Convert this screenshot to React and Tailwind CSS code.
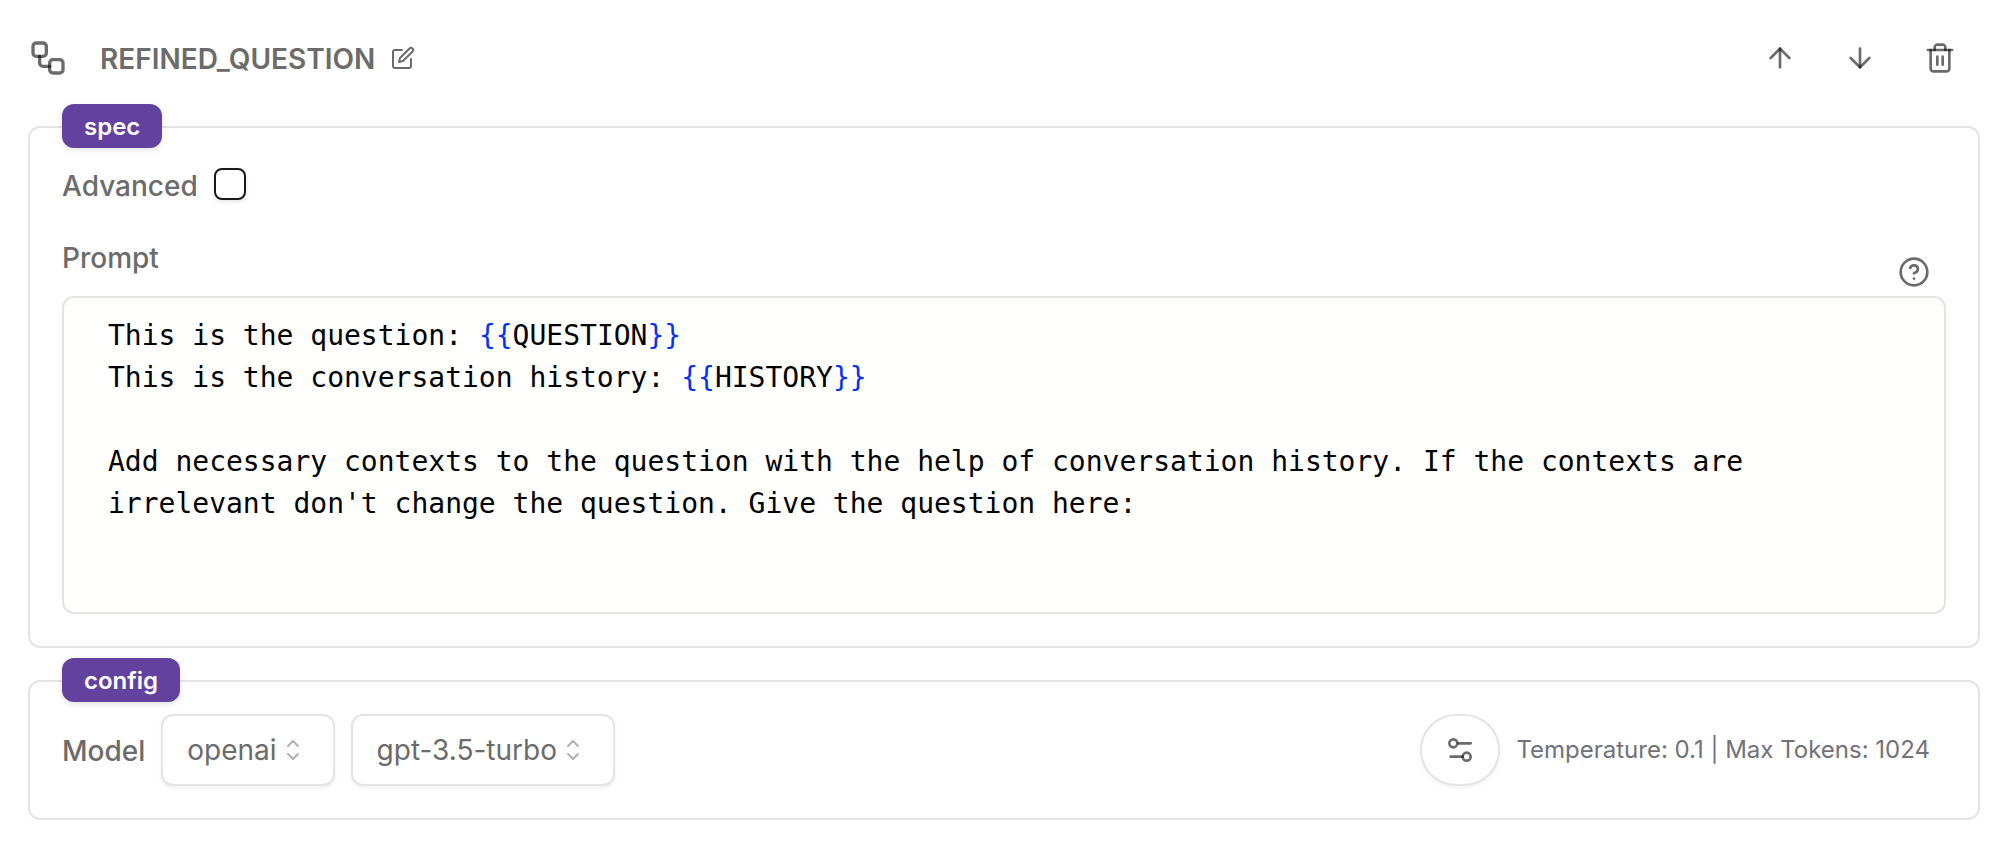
import { useState } from "react";

function Icon({ children, className }) {
  return (
    <svg viewBox="0 0 24 24" className={className} fill="none" stroke="rgba(0,0,0,0.58)" strokeWidth="2" strokeLinecap="round" strokeLinejoin="round" aria-hidden="true">
      {children}
    </svg>
  );
}

function Panel({ title, children, className }) {
  return (
    <section className={`relative rounded-xl border-2 border-[#e4e4e4] px-8 ${className}`}>
      <h2 className="absolute -top-6 left-8 rounded-xl bg-[#63419f] px-[22px] pt-[7px] pb-[5px] text-2xl leading-8 font-semibold text-white shadow-[0_2px_6px_rgba(0,0,0,0.12)]">
        {title}
      </h2>
      {children}
    </section>
  );
}

function Picker({ label, value, options }) {
  const [current, setCurrent] = useState(value);
  return (
    <div className="relative">
      <select
        aria-label={label}
        value={current}
        onChange={(e) => setCurrent(e.target.value)}
        className="field-sizing-content h-[72px] appearance-none rounded-xl border-2 border-[#e4e4e4] bg-white pr-14 pl-6 text-[28px] leading-10 text-[#6b6b6b] shadow-[0_2px_4px_rgba(0,0,0,0.06)]"
      >
        {options.map((o) => (
          <option key={o}>{o}</option>
        ))}
      </select>
      <svg viewBox="0 0 12 20" className="pointer-events-none absolute top-[26px] right-9 h-5 w-3" fill="none" stroke="#b0b0b0" strokeWidth="2" strokeLinecap="round" strokeLinejoin="round" aria-hidden="true">
        <path d="M1 6 6 1l5 5" />
        <path d="M1 14l5 5 5-5" />
      </svg>
    </div>
  );
}

function Variable({ name }) {
  return (
    <>
      <span className="text-[#0431fa]">{"{{"}</span>
      {name}
      <span className="text-[#0431fa]">{"}}"}</span>
    </>
  );
}

export default function App() {
  return (
    <main className="bg-white pt-7 pr-[26px] pl-7 font-[Inter,sans-serif] text-[28px] leading-10 text-[#6b6b6b]">
      <header className="mb-[38px] flex h-[60px] items-center justify-between pr-6">
        <div className="flex items-center">
          <Icon className="h-10 w-10">
            <rect x="3" y="3" width="8" height="8" rx="2" />
            <path d="M7 11v4a2 2 0 0 0 2 2h4" />
            <rect x="13" y="13" width="8" height="8" rx="2" />
          </Icon>
          <h1 className="ml-8 pt-0.5 font-semibold">REFINED_QUESTION</h1>
          <button type="button" aria-label="Rename" className="ml-4">
            <Icon className="h-6 w-6">
              <path d="M11 4H4a2 2 0 0 0-2 2v14a2 2 0 0 0 2 2h14a2 2 0 0 0 2-2v-7" />
              <path d="M18.5 2.5a2.121 2.121 0 0 1 3 3L12 15l-4 1 1-4z" />
            </Icon>
          </button>
        </div>
        <div className="flex items-center gap-12">
          <button type="button" aria-label="Move up">
            <Icon className="h-8 w-8">
              <path d="m5 12 7-7 7 7" />
              <path d="M12 19V5" />
            </Icon>
          </button>
          <button type="button" aria-label="Move down">
            <Icon className="h-8 w-8">
              <path d="m5 12 7 7 7-7" />
              <path d="M12 5v14" />
            </Icon>
          </button>
          <button type="button" aria-label="Delete">
            <Icon className="h-8 w-8">
              <path d="M3 6h18" />
              <path d="M19 6v14c0 1-1 2-2 2H7c-1 0-2-1-2-2V6" />
              <path d="M8 6V4c0-1 1-2 2-2h4c1 0 2 1 2 2v2" />
              <path d="M10 11v6" />
              <path d="M14 11v6" />
            </Icon>
          </button>
        </div>
      </header>

      <Panel title="spec" className="pt-[38px] pb-8">
        <div className="flex items-start gap-4">
          <label htmlFor="advanced" className="font-medium">Advanced</label>
          <input id="advanced" type="checkbox" className="mt-0.5 h-8 w-8 appearance-none rounded-lg border-2 border-[#18181b] shadow-[0_2px_4px_rgba(0,0,0,0.1)] checked:bg-[#18181b]" />
        </div>
        <div className="mt-8 flex justify-between pr-4">
          <h3 id="prompt" className="font-medium">Prompt</h3>
          <button type="button" aria-label="Help" className="mt-[18px] mb-2">
            <Icon className="h-8 w-8">
              <circle cx="12" cy="12" r="10" />
              <path d="M9.09 9a3 3 0 0 1 5.83 1c0 2-3 3-3 3" />
              <path d="M12 17h.01" />
            </Icon>
          </button>
        </div>
        <div
          role="textbox"
          aria-multiline="true"
          aria-labelledby="prompt"
          contentEditable
          suppressContentEditableWarning
          className="min-h-[318px] rounded-xl border-2 border-[#e4e4e4] bg-[#fffffd] px-11 pt-[17px] pb-4 font-['DejaVu_Sans_Mono',monospace] text-[28px] leading-[42px] whitespace-pre-wrap text-black"
        >
          <p>This is the question: <Variable name="QUESTION" /></p>
          <p>This is the conversation history: <Variable name="HISTORY" /></p>
          <p><br /></p>
          <p>Add necessary contexts to the question with the help of conversation history. If the contexts are irrelevant don't change the question. Give the question here:</p>
        </div>
      </Panel>

      <Panel title="config" className="mt-8 py-8">
        <div className="flex items-center justify-between pr-4">
          <div className="flex items-center gap-4">
            <span className="pt-0.5 font-medium">Model</span>
            <Picker label="Provider" value="openai" options={["openai"]} />
            <Picker label="Model name" value="gpt-3.5-turbo" options={["gpt-3.5-turbo"]} />
          </div>
          <div className="flex items-center gap-4">
            <button type="button" aria-label="Model settings" className="flex h-[72px] w-20 items-center justify-center rounded-full border-2 border-[#e4e4e4] shadow-[0_2px_4px_rgba(0,0,0,0.06)]">
              <Icon className="h-8 w-8">
                <path d="M20 7h-9" />
                <path d="M14 17H5" />
                <circle cx="17" cy="17" r="3" />
                <circle cx="7" cy="7" r="3" />
              </Icon>
            </button>
            <p className="text-2xl text-[#71717a]">Temperature: 0.1 | Max Tokens: 1024</p>
          </div>
        </div>
      </Panel>
    </main>
  );
}
